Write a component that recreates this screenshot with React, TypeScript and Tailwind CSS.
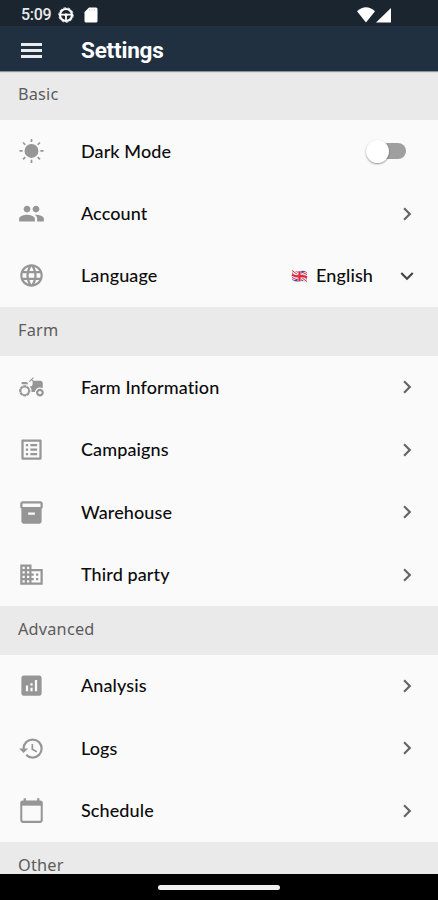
import React, { useState } from 'react';
import { IconType } from 'react-icons';
import {
  MdAgriculture,
  MdAnalytics,
  MdBusiness,
  MdChevronRight,
  MdExpandMore,
  MdGroup,
  MdHistory,
  MdInventory2,
  MdLanguage,
  MdListAlt,
} from 'react-icons/md';

const SunIcon = () => (
  <svg viewBox="0 0 24 24" className="size-[27px]" fill="currentColor" stroke="currentColor">
    <circle cx="12" cy="11.5" r="6.2" stroke="none" />
    <g strokeWidth="1.5">
      <path d="M12 .800v2.800M12 19.400v2.800M1.300 11.500h2.800M19.900 11.500h2.800M4.500 4l2 2M17.500 17l2 2M4.500 19l2-2M17.500 6l2-2" />
    </g>
  </svg>
);

const CalendarIcon = () => (
  <svg viewBox="0 0 24 24" className="size-[27px]" fill="none" stroke="currentColor">
    <rect x="2.900" y="3.900" width="18.200" height="18.200" rx="1.600" strokeWidth="1.800" />
    <path d="M2.500 5.600h19" strokeWidth="4.200" />
    <path d="M6 1v3M18 1v3" strokeWidth="2" />
  </svg>
);

const WheelIcon = () => (
  <svg viewBox="0 0 16 16" className="size-4" fill="none" stroke="white">
    <circle cx="8" cy="8" r="6" strokeWidth="2.200" />
    <circle cx="8" cy="8" r="7.300" strokeWidth=".8" strokeDasharray="2.800 1.700" />
    <path d="M2.500 7.600h11M8 8v5.500" strokeWidth="1.800" />
    <circle cx="8" cy="8" r="1.200" fill="white" />
  </svg>
);

const FlagIcon = () => (
  <svg viewBox="0 0 17 14" className="h-[14px] w-[17px]">
    <path d="M1 1Q5 3.200 8.500 2.200T16 3L16 13Q12 11.500 8.500 12.300T1 11Z" fill="#55528f" />
    <path d="M1 1.500L16 12.500M16 3.500L1 10.500" stroke="#f5e9ef" strokeWidth="2.800" />
    <path d="M1 1.500L16 12.500M16 3.500L1 10.500" stroke="#e0354b" strokeWidth="1" />
    <path d="M8.500 2.200V12.300M1 5.700Q5 7.800 8.500 7.200T16 8.200" stroke="#f5e9ef" strokeWidth="3.600" fill="none" />
    <path d="M8.500 2.200V12.300M1 5.700Q5 7.800 8.500 7.200T16 8.200" stroke="#e5263c" strokeWidth="2.200" fill="none" />
  </svg>
);

const StatusBar = () => (
  <div className="flex h-[26px] shrink-0 items-center bg-[#1a252f] pt-[3px] pl-[21px] pr-[46px] text-white">
    <span className="w-[37px] font-['Roboto',sans-serif] text-[16px] leading-none font-medium tracking-[-0.3px] text-[#e8eaec]">5:09</span>
    <WheelIcon />
    <svg viewBox="0 0 14 16" className="ml-[10px] h-4 w-[14px]" fill="white">
      <path d="M5 .5h7a1.500 1.500 0 0 1 1.500 1.500v12a1.500 1.500 0 0 1-1.500 1.500H2A1.500 1.500 0 0 1 .5 14V5z" />
      <path d="M5.500 2v2M8 2v2M10.500 2v2" stroke="#cfd3d6" strokeWidth=".8" />
    </svg>
    <svg viewBox="0 0 36 16" className="ml-auto h-4 w-9" fill="white">
      <path d="M1 4.200Q10 -3.500 19 4.200L10 15.500Z" />
      <path d="M35 1v14.500H20Z" />
    </svg>
  </div>
);

const SectionTitle = ({ title }: { title: string }) => (
  <h2 className="flex h-[49px] shrink-0 items-center bg-[#eaeaea] pl-[18px] pb-[2px] font-['Noto_Sans',sans-serif] text-[16.3px] tracking-[0.2px] text-[#5c5c5c]">
    {title}
  </h2>
);

type RowProps = {
  label: string;
  icon: IconType | React.FC;
  children?: React.ReactNode;
};

const Row = ({ label, icon: Icon, children }: RowProps) => (
  <div className="flex h-[62.4px] shrink-0 items-center px-[18px]">
    <span className="w-[63px] text-[27px] text-[#969696]">
      <Icon />
    </span>
    <span className="flex-1 text-[18px] font-medium tracking-[0.1px] text-[#0c0c0c] [font-variant-ligatures:none]">{label}</span>
    {children || <MdChevronRight className="size-[26px] text-[#666]" />}
  </div>
);

const App: React.FC = () => {
  const [darkMode, setDarkMode] = useState(false);

  return (
    <div className="flex h-[900px] w-full flex-col overflow-hidden bg-[#fafafa] font-['Lato',sans-serif]">
      <StatusBar />
      <header className="relative flex h-[45px] shrink-0 items-center bg-[#203040] pt-[4px] pl-[21px] text-white shadow-[0_1px_1px_#8a929a]">
        <button type="button" aria-label="Menu" className="flex w-[21px] flex-col gap-[3px]">
          <span className="h-[3px] bg-[#e9ebed]" />
          <span className="h-[3px] bg-[#e9ebed]" />
          <span className="h-[3px] bg-[#e9ebed]" />
        </button>
        <h1 className="ml-[39px] font-['Roboto',sans-serif] text-[22.5px] font-bold tracking-[-0.2px]">Settings</h1>
      </header>

      <main className="flex min-h-0 flex-1 flex-col overflow-hidden">
        <SectionTitle title="Basic" />
        <Row label="Dark Mode" icon={SunIcon}>
          <button
            type="button"
            role="switch"
            aria-checked={darkMode}
            aria-label="Dark Mode"
            onClick={() => setDarkMode(!darkMode)}
            className="mr-[14px] flex h-4 w-[39px] items-center rounded-full bg-[#9f9f9f]"
          >
            <span className={`size-[23px] shrink-0 rounded-full bg-white shadow-[0_1px_2px_rgba(0,0,0,0.4)] ${darkMode ? 'ml-[17px]' : '-ml-px'}`} />
          </button>
        </Row>
        <Row label="Account" icon={MdGroup} />
        <Row label="Language" icon={MdLanguage}>
          <div className="flex items-center">
            <FlagIcon />
            <span className="ml-2 text-[18px] font-medium tracking-[0.1px] text-[#0c0c0c]">English</span>
            <MdExpandMore className="ml-[21px] size-[26px] text-[#444]" />
          </div>
        </Row>

        <SectionTitle title="Farm" />
        <Row label="Farm Information" icon={MdAgriculture} />
        <Row label="Campaigns" icon={MdListAlt} />
        <Row label="Warehouse" icon={MdInventory2} />
        <Row label="Third party" icon={MdBusiness} />

        <SectionTitle title="Advanced" />
        <Row label="Analysis" icon={MdAnalytics} />
        <Row label="Logs" icon={MdHistory} />
        <Row label="Schedule" icon={CalendarIcon} />

        <SectionTitle title="Other" />
      </main>

      <footer className="flex h-[26px] shrink-0 items-center justify-center bg-black">
        <div className="h-[5px] w-[122px] rounded-full bg-[#f0f0f0]" />
      </footer>
    </div>
  );
};

export default App;
